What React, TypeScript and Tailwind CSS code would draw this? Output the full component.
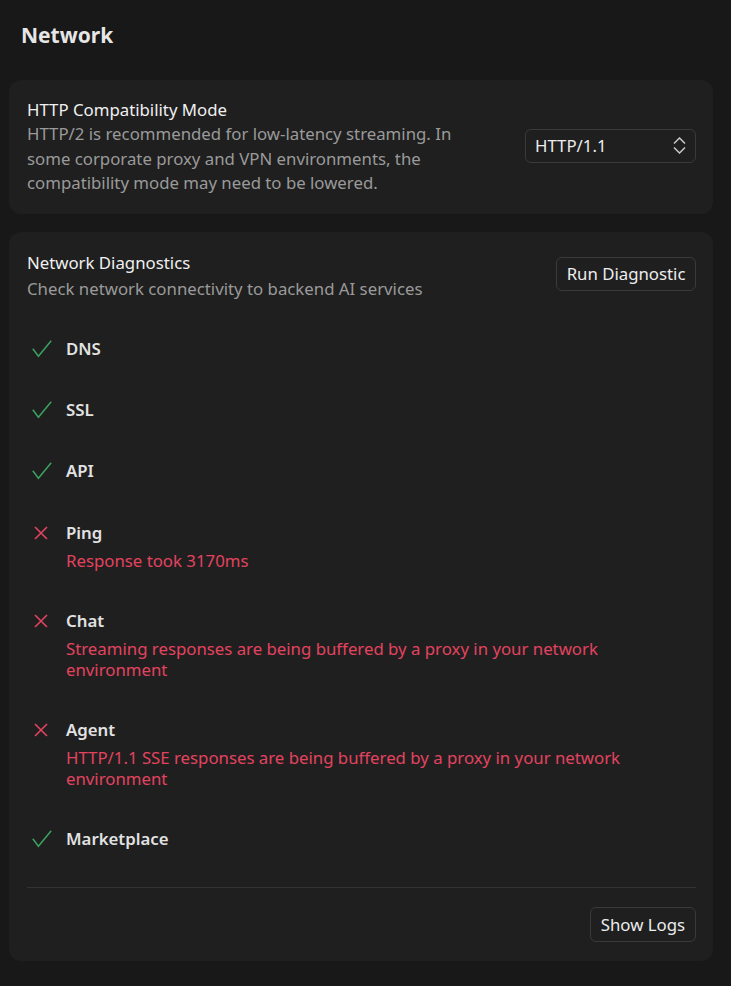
import React from 'react';

type Check = {
  name: string;
  ok: boolean;
  detail?: string;
};

const checks: Check[] = [
  { name: 'DNS', ok: true },
  { name: 'SSL', ok: true },
  { name: 'API', ok: true },
  { name: 'Ping', ok: false, detail: 'Response took 3170ms' },
  {
    name: 'Chat',
    ok: false,
    detail: 'Streaming responses are being buffered by a proxy in your network environment',
  },
  {
    name: 'Agent',
    ok: false,
    detail: 'HTTP/1.1 SSE responses are being buffered by a proxy in your network environment',
  },
  { name: 'Marketplace', ok: true },
];

const CheckIcon = () => (
  <svg width="20" height="18" viewBox="0 0 20 18" fill="none" className="shrink-0">
    <path d="M0.8 8.8 L6.4 16.2 L19.2 0.8" stroke="#3aa360" strokeWidth="1.5" strokeLinejoin="miter" />
  </svg>
);

const CrossIcon = () => (
  <svg width="14" height="14" viewBox="0 0 14 14" fill="none" className="shrink-0">
    <path d="M1 1 L13 13 M13 1 L1 13" stroke="#e3435f" strokeWidth="1.6" />
  </svg>
);

const UpDown = () => (
  <svg width="13" height="17" viewBox="0 0 13 17" fill="none">
    <path d="M1 6.5 L6.5 1 L12 6.5" stroke="#c8c8c8" strokeWidth="1.5" />
    <path d="M1 10.5 L6.5 16 L12 10.5" stroke="#c8c8c8" strokeWidth="1.5" />
  </svg>
);

export default function App() {
  return (
    <div
      className="min-h-[986px] w-full bg-[#181818] pl-[9px] pr-[18px] pt-[19px] pb-[26px] text-[16.8px] text-[#e8e8e8]"
      style={{ fontFamily: '"Noto Sans", "Open Sans", sans-serif' }}
    >
      <h1 className="ml-[12px] text-[21px] font-bold leading-[32px] text-[#e6e6e6]">Network</h1>

      {/* HTTP mode */}
      <div className="mt-[29px] flex items-center justify-between rounded-[12px] bg-[#1f1f1f] px-[17px] pt-[18px] pb-[18px]">
        <div className="w-[445px] pl-[1px]">
          <div className="leading-[24px] text-[#f0f0f0]">HTTP Compatibility Mode</div>
          <div className="leading-[24.5px] text-[#9a9a9a]">
            HTTP/2 is recommended for low-latency streaming. In some corporate proxy and VPN
            environments, the compatibility mode may need to be lowered.
          </div>
        </div>
        <div className="mt-[-2px] flex h-[34px] w-[171px] items-center justify-between rounded-[6px] border border-[#3a3a3a] pl-[9px] pr-[9px] text-[#ededed]">
          <span className="leading-[24px]">HTTP/1.1</span>
          <UpDown />
        </div>
      </div>

      {/* Diagnostics */}
      <div className="mt-[18px] rounded-[12px] bg-[#1f1f1f] pl-[18px] pr-[17px] pt-[19px] pb-[19px]">
        <div className="flex items-center justify-between">
          <div>
            <div className="leading-[24px] text-[#f0f0f0]">Network Diagnostics</div>
            <div className="mt-[2px] leading-[24px] text-[#9a9a9a]">
              Check network connectivity to backend AI services
            </div>
          </div>
          <button className="-mt-[4px] h-[34px] rounded-[6px] border border-[#3a3a3a] px-[9.5px] leading-[24px] text-[#ededed]">
            Run Diagnostic
          </button>
        </div>

        <div className="mt-[36px] flex flex-col gap-[37.4px]">
          {checks.map((c) => (
            <div key={c.name} className="flex">
              <div className="flex h-[24px] w-[39px] items-center pl-[5px]">
                {c.ok ? (
                  <CheckIcon />
                ) : (
                  <span className="pl-[2px]">
                    <CrossIcon />
                  </span>
                )}
              </div>
              <div className="flex-1 pr-[60px]">
                <div className="font-semibold leading-[24px] text-[#e2e2e2]">{c.name}</div>
                {c.detail && (
                  <div className="mt-[5px] leading-[21.5px] text-[#e3435f]">{c.detail}</div>
                )}
              </div>
            </div>
          ))}
        </div>

        <div className="mt-[36px] border-t border-[#333333]" />
        <div className="mt-[19px] flex justify-end">
          <button className="h-[35px] rounded-[6px] border border-[#3a3a3a] px-[10px] leading-[24px] text-[#ededed]">
            Show Logs
          </button>
        </div>
      </div>
    </div>
  );
}
